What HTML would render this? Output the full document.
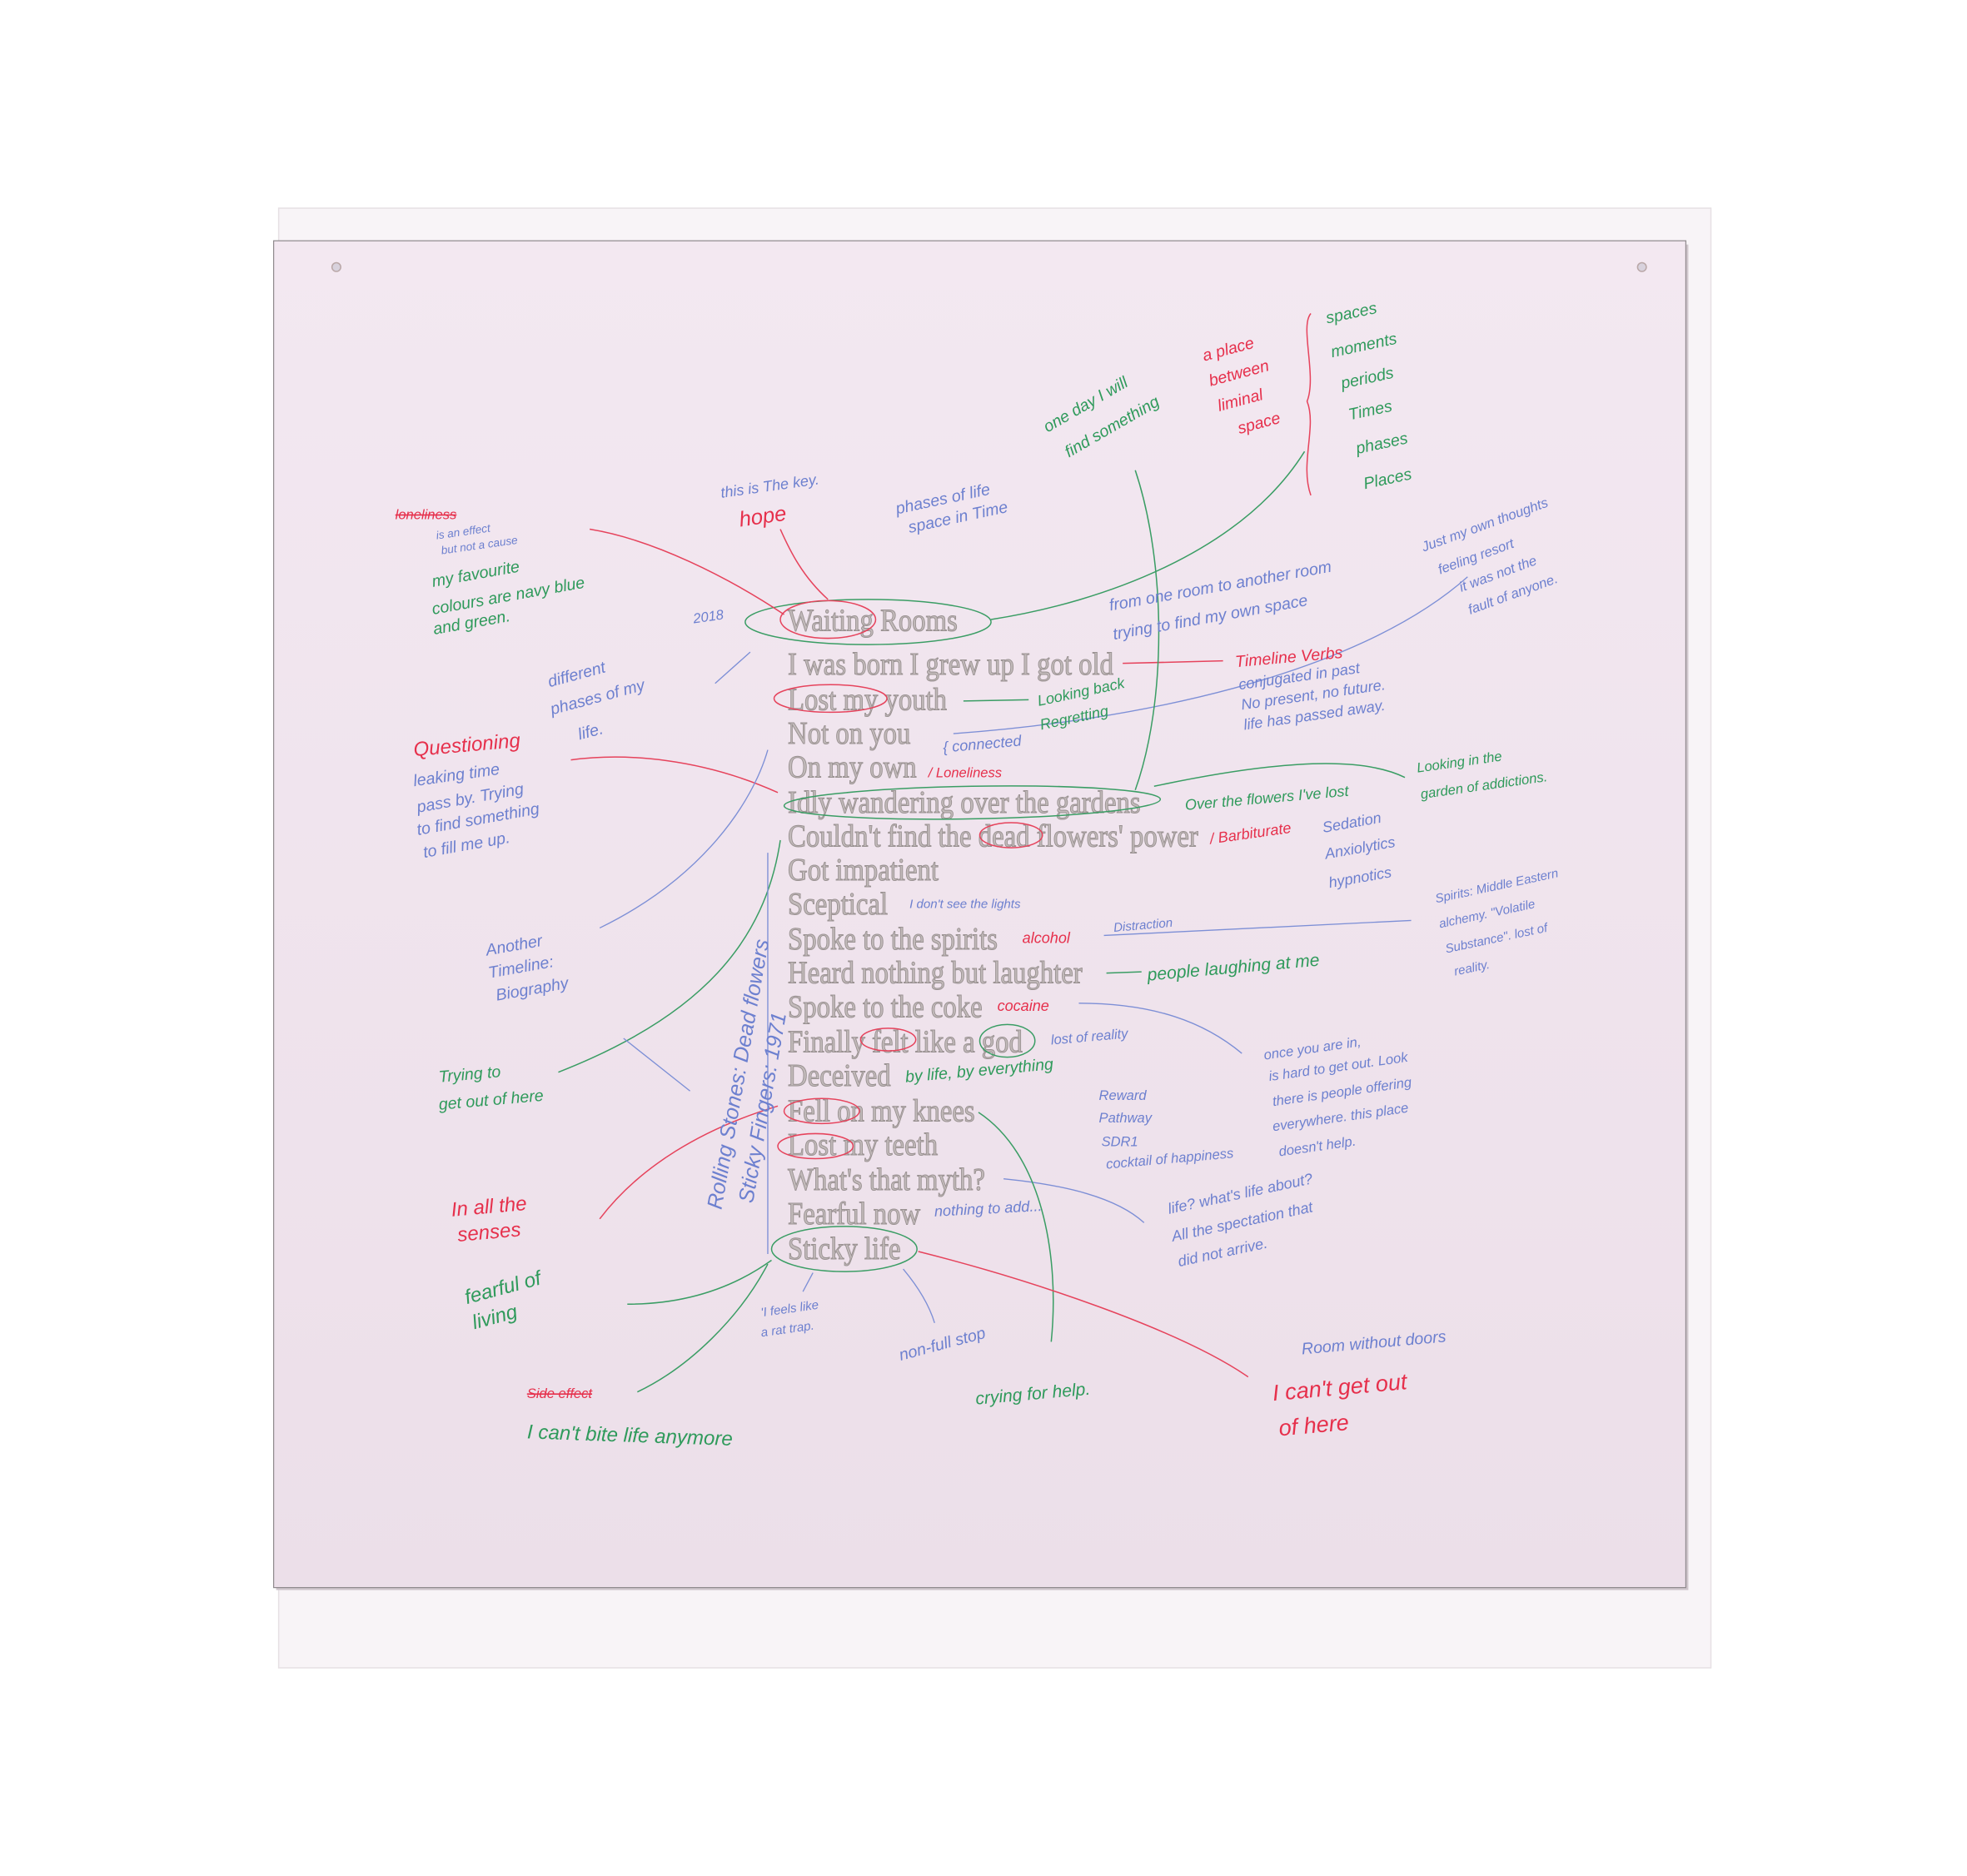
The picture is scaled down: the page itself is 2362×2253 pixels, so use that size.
<!DOCTYPE html>
<html><head><meta charset="utf-8"><style>
html,body{margin:0;padding:0;background:#fff;}
svg{display:block}
.e{font-family:"Liberation Serif",serif;font-size:25px;fill:#c2baba;stroke:#9a9292;stroke-width:.7px}
.h{font-family:"Liberation Sans",sans-serif;font-style:italic;font-size:13px}
.g{fill:#2f9a5b}.r{fill:#e6304c}.b{fill:#6d80cf}
.lg{stroke:#3a9d64;fill:none;stroke-width:1}.lr{stroke:#e6435c;fill:none;stroke-width:1}.lb{stroke:#7d8fd6;fill:none;stroke-width:.9}
</style></head><body>
<svg width="2362" height="2253" viewBox="0 0 1568 1496" xmlns="http://www.w3.org/2000/svg">
<defs><linearGradient id="pg" x1="0" y1="0" x2="0" y2="1"><stop offset="0" stop-color="#f3e8f1"/><stop offset="1" stop-color="#ecdfe9"/></linearGradient></defs>
<rect x="222" y="166" width="1142" height="1164" fill="#f8f4f7" stroke="#e6e0e4" stroke-width="1"/>
<rect x="220" y="195" width="1126" height="1073" fill="#cfc6cc"/>
<rect x="218" y="192" width="1126" height="1074" fill="url(#pg)" stroke="#8f898d" stroke-width="0.8"/>
<circle cx="268" cy="213" r="3.5" fill="#d8d2dd" stroke="#b9a7a7"/>
<circle cx="1309" cy="213" r="3.5" fill="#d8d2dd" stroke="#b9a7a7"/>
<g class="e" transform="translate(628,0) scale(0.87,1)">
<text x="0" y="503">Waiting Rooms</text>
<text x="0" y="538">I was born I grew up I got old</text>
<text x="0" y="566">Lost my youth</text>
<text x="0" y="593">Not on you</text>
<text x="0" y="620">On my own</text>
<text x="0" y="648">Idly wandering over the gardens</text>
<text x="0" y="675">Couldn't find the dead flowers' power</text>
<text x="0" y="702">Got impatient</text>
<text x="0" y="729">Sceptical</text>
<text x="0" y="757">Spoke to the spirits</text>
<text x="0" y="784">Heard nothing but laughter</text>
<text x="0" y="811">Spoke to the coke</text>
<text x="0" y="839">Finally felt like a god</text>
<text x="0" y="866">Deceived</text>
<text x="0" y="894">Fell on my knees</text>
<text x="0" y="921">Lost my teeth</text>
<text x="0" y="949">What's that myth?</text>
<text x="0" y="976">Fearful now</text>
<text x="0" y="1004">Sticky life</text>
</g>
<ellipse cx="692" cy="496" rx="98" ry="18" class="lg"/>
<ellipse cx="660" cy="494" rx="38" ry="15" class="lr"/>
<ellipse cx="662" cy="557" rx="45" ry="11" class="lr"/>
<ellipse cx="775" cy="640" rx="150" ry="13" class="lg" transform="rotate(-1 775 640)"/>
<ellipse cx="806" cy="666" rx="25" ry="10" class="lr"/>
<ellipse cx="803" cy="830" rx="22" ry="13" class="lg"/>
<ellipse cx="708" cy="829" rx="22" ry="9" class="lr"/>
<ellipse cx="655" cy="886" rx="30" ry="10" class="lr"/>
<ellipse cx="650" cy="914" rx="30" ry="10" class="lr"/>
<ellipse cx="673" cy="996" rx="58" ry="18" class="lg"/>
<path class="lg" d="M790 494 C880 480 990 440 1040 360"/>
<path class="lr" d="M660 478 C640 460 630 440 622 422"/>
<path class="lr" d="M625 490 C580 460 520 430 470 422"/>
<path class="lb" d="M598 520 L570 545"/>
<path class="lr" d="M895 529 L975 527"/>
<path class="lg" d="M768 559 L820 558"/>
<path class="lb" d="M760 585 C900 575 1080 540 1170 460"/>
<path class="lr" d="M620 632 C560 605 500 600 455 606"/>
<path class="lg" d="M920 627 C1000 610 1080 600 1120 620"/>
<path class="lg" d="M905 630 C930 560 930 450 905 375"/>
<path class="lb" d="M612 598 C600 640 560 700 478 740"/>
<path class="lb" d="M880 746 L1125 734"/>
<path class="lg" d="M882 776 L910 775"/>
<path class="lb" d="M860 800 C920 800 960 815 990 840"/>
<path class="lg" d="M622 670 C610 750 560 810 445 855"/>
<path class="lr" d="M620 882 C560 900 510 930 478 972"/>
<path class="lb" d="M800 940 C850 945 890 955 912 975"/>
<path class="lg" d="M780 887 C830 920 845 1000 838 1070"/>
<path class="lr" d="M732 998 C820 1020 940 1060 995 1098"/>
<path class="lb" d="M720 1012 C735 1030 742 1045 745 1055"/>
<path class="lb" d="M648 1015 L640 1030"/>
<path class="lg" d="M615 1005 C580 1030 540 1040 500 1040"/>
<path class="lg" d="M612 1008 C590 1050 550 1090 508 1110"/>
<path class="lb" d="M612 680 L612 1000"/>
<path class="lb" d="M497 828 L550 870"/>
<path class="lr" d="M1045 250 C1036 260 1050 300 1042 320 C1050 340 1036 370 1045 395"/>
<g class="h">
<text x="575" y="397" class="b" font-size="12" transform="rotate(-8 575 397)">this is The key.</text>
<text x="590" y="420" class="r" font-size="17" transform="rotate(-8 590 420)">hope</text>
<text x="715" y="410" class="b" transform="rotate(-12 715 410)">phases of life</text>
<text x="725" y="425" class="b" transform="rotate(-12 725 425)">space in Time</text>
<text x="835" y="345" class="g" transform="rotate(-30 835 345)">one day I will</text>
<text x="852" y="365" class="g" transform="rotate(-30 852 365)">find something</text>
<text x="960" y="288" class="r" transform="rotate(-15 960 288)">a place</text>
<text x="965" y="308" class="r" transform="rotate(-15 965 308)">between</text>
<text x="972" y="328" class="r" transform="rotate(-15 972 328)">liminal</text>
<text x="988" y="346" class="r" transform="rotate(-15 988 346)">space</text>
<text x="1058" y="258" class="g" transform="rotate(-12 1058 258)">spaces</text>
<text x="1062" y="285" class="g" transform="rotate(-12 1062 285)">moments</text>
<text x="1070" y="310" class="g" transform="rotate(-12 1070 310)">periods</text>
<text x="1076" y="335" class="g" transform="rotate(-12 1076 335)">Times</text>
<text x="1082" y="362" class="g" transform="rotate(-12 1082 362)">phases</text>
<text x="1088" y="390" class="g" transform="rotate(-12 1088 390)">Places</text>
<text x="1135" y="440" class="b" font-size="11" transform="rotate(-20 1135 440)">Just my own thoughts</text>
<text x="1148" y="458" class="b" font-size="11" transform="rotate(-20 1148 458)">feeling resort</text>
<text x="1165" y="472" class="b" font-size="11" transform="rotate(-20 1165 472)">it was not the</text>
<text x="1172" y="490" class="b" font-size="11" transform="rotate(-20 1172 490)">fault of anyone.</text>
<text x="315" y="414" class="r" font-size="11" text-decoration="line-through">loneliness</text>
<text x="348" y="430" class="b" font-size="9" transform="rotate(-8 348 430)">is an effect</text>
<text x="352" y="442" class="b" font-size="9" transform="rotate(-8 352 442)">but not a cause</text>
<text x="345" y="468" class="g" transform="rotate(-10 345 468)">my favourite</text>
<text x="345" y="490" class="g" transform="rotate(-10 345 490)">colours are navy blue</text>
<text x="346" y="506" class="g" transform="rotate(-10 346 506)">and green.</text>
<text x="553" y="497" class="b" font-size="11" transform="rotate(-8 553 497)">2018</text>
<text x="438" y="548" class="b" transform="rotate(-15 438 548)">different</text>
<text x="440" y="570" class="b" transform="rotate(-15 440 570)">phases of my</text>
<text x="462" y="590" class="b" transform="rotate(-15 462 590)">life.</text>
<text x="330" y="603" class="r" font-size="16" transform="rotate(-5 330 603)">Questioning</text>
<text x="330" y="627" class="b" transform="rotate(-8 330 627)">leaking time</text>
<text x="333" y="648" class="b" transform="rotate(-10 333 648)">pass by. Trying</text>
<text x="333" y="666" class="b" transform="rotate(-10 333 666)">to find something</text>
<text x="338" y="684" class="b" transform="rotate(-10 338 684)">to fill me up.</text>
<text x="388" y="762" class="b" transform="rotate(-10 388 762)">Another</text>
<text x="390" y="780" class="b" transform="rotate(-10 390 780)">Timeline:</text>
<text x="396" y="798" class="b" transform="rotate(-10 396 798)">Biography</text>
<text x="350" y="863" class="g" transform="rotate(-5 350 863)">Trying to</text>
<text x="350" y="885" class="g" transform="rotate(-5 350 885)">get out of here</text>
<text x="360" y="970" class="r" font-size="16" transform="rotate(-5 360 970)">In all the</text>
<text x="365" y="990" class="r" font-size="16" transform="rotate(-5 365 990)">senses</text>
<text x="372" y="1040" class="g" font-size="16" transform="rotate(-15 372 1040)">fearful of</text>
<text x="378" y="1060" class="g" font-size="16" transform="rotate(-15 378 1060)">living</text>
<text x="420" y="1115" class="r" font-size="11" text-decoration="line-through">Side effect</text>
<text x="420" y="1147" class="g" font-size="16" transform="rotate(2 420 1147)">I can't bite life anymore</text>
<text x="575" y="965" class="b" font-size="17" transform="rotate(-80 575 965)">Rolling Stones: Dead flowers</text>
<text x="600" y="960" class="b" font-size="17" transform="rotate(-80 600 960)">Sticky Fingers: 1971</text>
<text x="607" y="1050" class="b" font-size="10" transform="rotate(-8 607 1050)">'I feels like</text>
<text x="607" y="1066" class="b" font-size="10" transform="rotate(-8 607 1066)">a rat trap.</text>
<text x="718" y="1085" class="b" transform="rotate(-15 718 1085)">non-full stop</text>
<text x="778" y="1120" class="g" font-size="14" transform="rotate(-5 778 1120)">crying for help.</text>
<text x="1015" y="1117" class="r" font-size="18" transform="rotate(-5 1015 1117)">I can't get out</text>
<text x="1020" y="1145" class="r" font-size="18" transform="rotate(-5 1020 1145)">of here</text>
<text x="1038" y="1080" class="b" transform="rotate(-5 1038 1080)">Room without doors</text>
<text x="885" y="487" class="b" transform="rotate(-10 885 487)">from one room to another room</text>
<text x="888" y="510" class="b" transform="rotate(-10 888 510)">trying to find my own space</text>
<text x="985" y="532" class="r" transform="rotate(-5 985 532)">Timeline Verbs</text>
<text x="988" y="550" class="b" font-size="12" transform="rotate(-8 988 550)">conjugated in past</text>
<text x="990" y="566" class="b" font-size="12" transform="rotate(-8 990 566)">No present, no future.</text>
<text x="992" y="582" class="b" font-size="12" transform="rotate(-8 992 582)">life has passed away.</text>
<text x="828" y="563" class="g" font-size="12" transform="rotate(-12 828 563)">Looking back</text>
<text x="830" y="582" class="g" font-size="12" transform="rotate(-12 830 582)">Regretting</text>
<text x="752" y="600" class="b" font-size="12" transform="rotate(-5 752 600)">{ connected</text>
<text x="740" y="620" class="r" font-size="11">/ Loneliness</text>
<text x="945" y="646" class="g" font-size="12" transform="rotate(-5 945 646)">Over the flowers I've lost</text>
<text x="1130" y="616" class="g" font-size="11" transform="rotate(-8 1130 616)">Looking in the</text>
<text x="1133" y="637" class="g" font-size="11" transform="rotate(-8 1133 637)">garden of addictions.</text>
<text x="965" y="673" class="r" font-size="12" transform="rotate(-8 965 673)">/ Barbiturate</text>
<text x="1055" y="664" class="b" font-size="12" transform="rotate(-10 1055 664)">Sedation</text>
<text x="1057" y="685" class="b" font-size="12" transform="rotate(-10 1057 685)">Anxiolytics</text>
<text x="1060" y="708" class="b" font-size="12" transform="rotate(-10 1060 708)">hypnotics</text>
<text x="725" y="724" class="b" font-size="10" fill="#334">I don't see the lights</text>
<text x="815" y="752" class="r" font-size="12">alcohol</text>
<text x="888" y="743" class="b" font-size="10" transform="rotate(-5 888 743)">Distraction</text>
<text x="1145" y="720" class="b" font-size="10" transform="rotate(-12 1145 720)">Spirits: Middle Eastern</text>
<text x="1148" y="740" class="b" font-size="10" transform="rotate(-12 1148 740)">alchemy. "Volatile</text>
<text x="1153" y="760" class="b" font-size="10" transform="rotate(-12 1153 760)">Substance". lost of</text>
<text x="1160" y="778" class="b" font-size="10" transform="rotate(-12 1160 778)">reality.</text>
<text x="915" y="782" class="g" font-size="14" transform="rotate(-5 915 782)">people laughing at me</text>
<text x="795" y="806" class="r" font-size="12">cocaine</text>
<text x="838" y="833" class="b" font-size="11" transform="rotate(-5 838 833)">lost of reality</text>
<text x="722" y="863" class="g" font-size="13" transform="rotate(-5 722 863)">by life, by everything</text>
<text x="1008" y="845" class="b" font-size="11" transform="rotate(-8 1008 845)">once you are in,</text>
<text x="1012" y="862" class="b" font-size="11" transform="rotate(-8 1012 862)">is hard to get out. Look</text>
<text x="1015" y="882" class="b" font-size="11" transform="rotate(-8 1015 882)">there is people offering</text>
<text x="1015" y="902" class="b" font-size="11" transform="rotate(-8 1015 902)">everywhere. this place</text>
<text x="1020" y="922" class="b" font-size="11" transform="rotate(-8 1020 922)">doesn't help.</text>
<text x="876" y="877" class="b" font-size="11">Reward</text>
<text x="876" y="895" class="b" font-size="11">Pathway</text>
<text x="878" y="914" class="b" font-size="11">SDR1</text>
<text x="882" y="932" class="b" font-size="11" transform="rotate(-5 882 932)">cocktail of happiness</text>
<text x="745" y="970" class="b" font-size="12" transform="rotate(-3 745 970)">nothing to add...</text>
<text x="932" y="968" class="b" font-size="12" transform="rotate(-12 932 968)">life? what's life about?</text>
<text x="935" y="990" class="b" font-size="12" transform="rotate(-12 935 990)">All the spectation that</text>
<text x="940" y="1010" class="b" font-size="12" transform="rotate(-12 940 1010)">did not arrive.</text>
</g>
</svg>
</body></html>
